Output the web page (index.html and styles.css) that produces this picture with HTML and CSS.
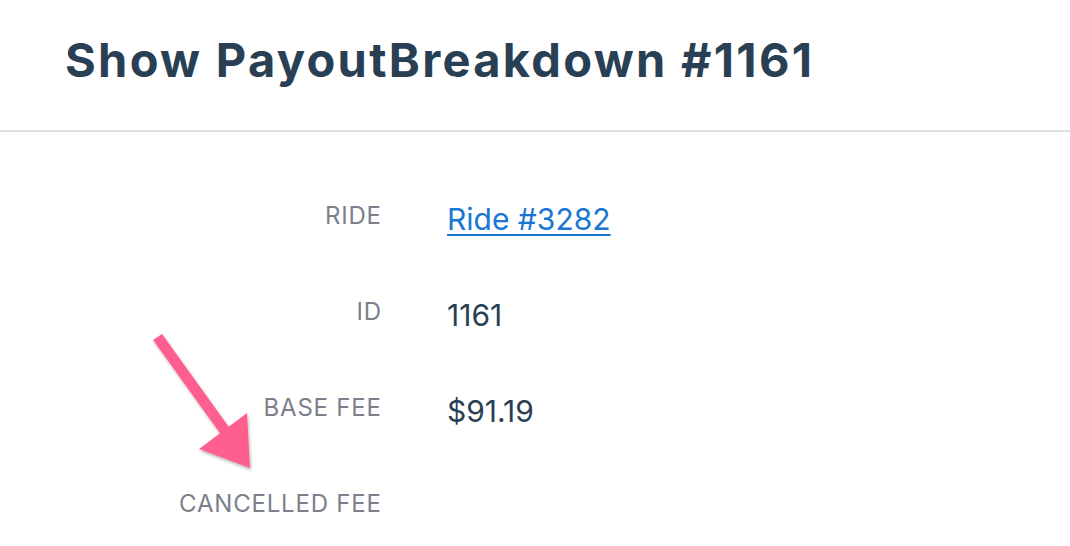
FILE: index.html
```html
<!DOCTYPE html>
<html lang="en">
<head>
<meta charset="utf-8">
<title>Show PayoutBreakdown #1161</title>
<link rel="stylesheet" href="styles.css">
</head>
<body>
<header class="main-header">
  <h1 class="main-title">Show PayoutBreakdown #1161</h1>
</header>
<main class="main-content">
  <dl class="attributes">
    <dt class="attr-label">RIDE</dt>
    <dd class="attr-data"><a class="attr-link" href="#">Ride #3282</a></dd>
    <dt class="attr-label">ID</dt>
    <dd class="attr-data">1161</dd>
    <dt class="attr-label">BASE FEE</dt>
    <dd class="attr-data">$91.19</dd>
    <dt class="attr-label">CANCELLED FEE</dt>
    <dd class="attr-data"></dd>
  </dl>
</main>
<svg class="annotation-arrow" width="140" height="170" viewBox="140 320 140 170" aria-hidden="true">
  <defs>
    <filter id="arrowShadow" x="-20%" y="-20%" width="140%" height="140%">
      <feDropShadow dx="1" dy="2" stdDeviation="1.5" flood-color="#000" flood-opacity="0.3"/>
    </filter>
  </defs>
  <g filter="url(#arrowShadow)" fill="#ff5e8e">
    <polygon points="153,340 162,334 231,430 222,436"/>
    <polygon points="199,449 247,413 250,468"/>
  </g>
</svg>
</body>
</html>
```

FILE: styles.css
```css
* {
  box-sizing: border-box;
}

html, body {
  margin: 0;
  padding: 0;
  background: #ffffff;
}

body {
  font-family: Inter, "Noto Sans", "Liberation Sans", sans-serif;
  color: #293f54;
  position: relative;
  height: 546px;
  overflow: hidden;
}

.main-header {
  height: 132px;
  border-bottom: 2px solid #dfe0e1;
  padding: 0 0 0 65px;
  display: flex;
  align-items: flex-start;
}

.main-title {
  margin: 0;
  padding-top: 31px;
  font-size: 47px;
  font-weight: 700;
  line-height: 58px;
  color: #293f54;
  letter-spacing: 2.3px;
}

.main-content {
  padding-top: 69px;
}

.attributes {
  margin: 0;
  display: grid;
  grid-template-columns: 381px 1fr;
  row-gap: 60px;
  column-gap: 66px;
  align-items: start;
}

.attr-label {
  margin: 0;
  text-align: right;
  font-size: 24px;
  line-height: 29px;
  letter-spacing: 0.8px;
  margin-right: -0.8px;
  color: #7b808c;
}

.attr-data {
  margin: 0;
  font-size: 30px;
  line-height: 36px;
  color: #293f54;
  min-height: 36px;
}

.attr-link {
  color: #1976d2;
  text-decoration: underline;
  text-decoration-thickness: 2px;
  text-underline-offset: 4px;
}

.annotation-arrow {
  position: absolute;
  left: 140px;
  top: 320px;
}
```
